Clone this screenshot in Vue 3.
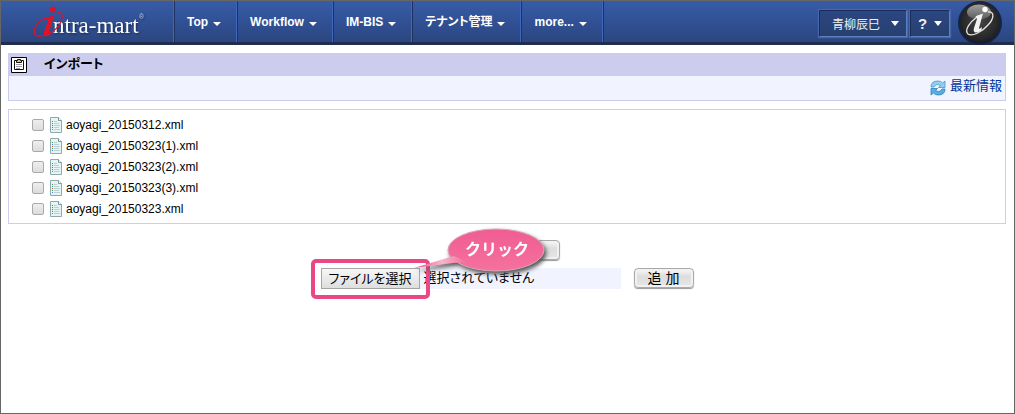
<script setup>
const menu = ['Top', 'Workflow', 'IM-BIS', 'テナント管理', 'more...']
const files = [
  'aoyagi_20150312.xml',
  'aoyagi_20150323(1).xml',
  'aoyagi_20150323(2).xml',
  'aoyagi_20150323(3).xml',
  'aoyagi_20150323.xml',
]
</script>

<template>
  <div class="page">
    <header class="header">
      <a class="logo" href="#">
        <svg width="120" height="40" viewBox="0 0 120 40" role="img">
          <g class="logo-shade">
            <text class="wordmark" x="21" y="32">ntra-mart</text>
            <text class="reg" x="107" y="18">®</text>
          </g>
          <path d="M25 12C30 10 32 15 28 23C23 31 12 36 5 35C-1 32 3 22 13 17" fill="none" stroke="#d8142a" stroke-width="1.3" />
          <circle cx="21" cy="8.500" r="3" fill="#e01226" />
          <path d="M14 17L22 14L17 31Q17 33 20 31L19.500 32.500Q16 36 13 35Q11 34 12 31L16 20Q16.500 17.500 14 18Z" fill="#e01226" />
        </svg>
      </a>
      <nav class="menu">
        <a v-for="item in menu" :key="item" class="menu-item" href="#">
          {{ item }}<i class="caret"></i>
        </a>
      </nav>
      <div class="tools">
        <button class="tool user" type="button">青柳辰巳<i class="arrow"></i></button>
        <button class="tool help" type="button"><b>?</b><i class="arrow"></i></button>
        <svg class="badge" width="46" height="44" viewBox="0 0 46 44">
          <defs>
            <radialGradient id="disc" cx="50%" cy="45%" r="55%">
              <stop offset="0" stop-color="#444" />
              <stop offset="0.75" stop-color="#292929" />
              <stop offset="1" stop-color="#161b29" />
            </radialGradient>
            <linearGradient id="shine" x1="0" y1="0" x2="0" y2="1">
              <stop offset="0" stop-color="#a0a0a0" />
              <stop offset="1" stop-color="#5b5b5b" />
            </linearGradient>
          </defs>
          <circle cx="23" cy="22" r="22" fill="#15244b" />
          <circle cx="23" cy="22" r="20.500" fill="url(#disc)" />
          <ellipse cx="22" cy="11" rx="12" ry="7.500" fill="url(#shine)" />
          <path d="M31 11C38 10 37 18 31 24C25 31 15 36 11 33C7 29 13 21 20 16" fill="none" stroke="#e4e4e4" stroke-width="1.300" />
          <circle cx="28" cy="8.500" r="2.700" fill="#fff" />
          <path d="M19 15L26 12.500L22 27Q22 29 25 26L24.500 29Q21 32 18 31.500Q16 30 17 27L20 18Q20.500 16 18.500 16Z" fill="#f2f2f2" />
        </svg>
      </div>
    </header>

    <main class="content">
      <section class="title-panel">
        <h1 class="title">
          <svg width="16" height="16" viewBox="0 0 16 16">
            <path d="M.5.5h15v15H.5z" fill="#fff" stroke="#000" />
            <path d="M3.500 3.500h9v9h-9z" fill="#fff" stroke="#111" />
            <path d="M5.500 5.500v-2h1v-1h3v1h1v2z" fill="#e6bd70" stroke="#111" />
            <path d="M5 7.500h6M5 9.500h6M5 11.500h4" stroke="#99a" />
          </svg>
          <span>インポート</span>
        </h1>
        <div class="actions">
          <a class="refresh" href="#">
            <svg width="16" height="16" viewBox="0 0 16 16">
              <path d="M1 7Q1 1 8 1Q11 1 12.500 3L15 1V7.500H8.500L10.500 5.500Q6 3 4 7Z" fill="#8fd0f2" stroke="#4a94c8" stroke-width=".8" />
              <path d="M15 9Q15 15 8 15Q5 15 3.500 13L1 15V8.500H7.500L5.500 10.500Q10 13 12 9Z" fill="#54b0e4" stroke="#2f80bc" stroke-width=".8" />
            </svg>
            最新情報
          </a>
        </div>
      </section>

      <ul class="files">
        <li v-for="file in files" :key="file">
          <label class="file">
            <input class="check" type="checkbox" />
            <svg width="12" height="16" viewBox="0 0 12 16">
              <path d="M.5.5h8l3 3v12H.5z" fill="#e6f4f4" stroke="#8eaaac" />
              <path d="M8.500.5v3h3" fill="#fff" stroke="#78999b" />
              <path d="M2 4.500h1M2 10.500h1" stroke="#2ba52b" />
              <path d="M2 6.500h1M2 12.500h1" stroke="#3d82dc" />
              <path d="M2 8.500h1" stroke="#c64b3c" />
              <path d="M4 4.500h3M4 6.500h5M4 8.500h6M4 10.500h5M4 12.500h6" stroke="#bccfd1" />
            </svg>
            <span>{{ file }}</span>
          </label>
        </li>
      </ul>

      <div class="submit-row">
        <button class="glass run" type="button" aria-label="インポート"></button>
      </div>
      <form class="upload" @submit.prevent>
        <div class="picker">
          <div class="pick">
            <button class="choose" type="button">ファイルを選択</button>
            <div class="highlight"></div>
            <svg class="callout" width="140" height="50" viewBox="0 0 140 50">
              <defs>
                <linearGradient id="tail" x1="0" y1="0" x2="1" y2="0">
                  <stop offset="0" stop-color="#ea4884" />
                  <stop offset="0.5" stop-color="#f6b5cb" />
                  <stop offset="1" stop-color="#f2679a" />
                </linearGradient>
                <linearGradient id="pink" x1="0" y1="0" x2="0" y2="1">
                  <stop offset="0" stop-color="#f05c91" />
                  <stop offset="1" stop-color="#f5719e" />
                </linearGradient>
              </defs>
              <ellipse cx="87" cy="22" rx="48" ry="21" fill="url(#pink)" stroke="#d9a9b9" />
              <path d="M5 40L45 28L60 35Q52 34 44 35Z" fill="url(#tail)" />
              <text class="callout-text" x="88" y="27">クリック</text>
            </svg>
          </div>
          <span class="status">選択されていません</span>
        </div>
        <button class="glass add" type="submit">追 加</button>
      </form>
    </main>
  </div>
</template>

<style>
body {
  margin: 0;
}
</style>

<style scoped>
.page {
  box-sizing: border-box;
  min-height: 100vh;
  border: 1px solid #666;
  background: #fff;
  color: #000;
  font: 13px/20px "Liberation Sans", "Noto Sans CJK JP", sans-serif;
}
.header {
  display: flex;
  height: 41px;
  border-bottom: 3px solid #212d4c;
  background: linear-gradient(#375ca8, #2b4680);
}
.logo {
  width: 172px;
  box-sizing: border-box;
  padding-left: 31px;
  flex: none;
}
.logo svg {
  display: block;
}
.logo-shade {
  filter: drop-shadow(1px 1px 1px #172a55);
}
.wordmark {
  font: 23px "Liberation Serif", serif;
  fill: #fff;
}
.reg {
  font: 7px "Liberation Sans", sans-serif;
  fill: #c3cde2;
}
.menu {
  display: flex;
  border-right: 1px solid #1f3261;
  border-left: 1px solid #3e68bd;
}
.menu-item {
  display: flex;
  align-items: center;
  box-sizing: border-box;
  padding: 0 15px 0 12px;
  border-left: 1px solid #1f3261;
  border-right: 1px solid #3e68bd;
  color: #fff;
  font-size: 12px;
  font-weight: bold;
  font-feature-settings: "palt";
  text-decoration: none;
}
.caret {
  margin: 4px 0 0 5px;
  border: 4px solid transparent;
  border-top-color: #fff;
  border-bottom: 0;
}
.tools {
  display: flex;
  align-items: center;
  margin-left: auto;
  padding-right: 15px;
  gap: 3px;
}
.tool {
  display: flex;
  align-items: center;
  justify-content: space-between;
  box-sizing: border-box;
  height: 27px;
  margin-top: 4px;
  padding: 0 7px 0 12px;
  border: 1px solid #5d7fbd;
  border-top-color: #1b2d56;
  border-left-color: #1b2d56;
  background: linear-gradient(#2b4681, #28406f);
  box-shadow: 0 0 1px 1px #4467ad;
  color: #eee;
  font: 12px "Liberation Sans", "Noto Sans CJK JP", sans-serif;
}
.user {
  width: 88px;
}
.help {
  width: 40px;
  padding-left: 7px;
}
.help b {
  font-size: 15px;
}
.arrow {
  border: 4px solid transparent;
  border-top: 5px solid #fff;
  border-bottom: 0;
}
.badge {
  margin: 2px -4px 0 4px;
}
.content {
  padding: 8px 8px 8px 7px;
}
.title-panel {
  border: 1px solid #cccdee;
  background: #f1f3ff;
}
.title {
  display: flex;
  align-items: center;
  gap: 17px;
  height: 22px;
  margin: 0;
  padding-left: 2px;
  background: #cccdee;
  font-size: 13px;
  font-feature-settings: "palt";
}
.title span {
  padding-bottom: 3px;
}
.actions {
  display: flex;
  justify-content: flex-end;
  height: 24px;
  padding-right: 3px;
}
.refresh {
  display: flex;
  align-items: center;
  gap: 4px;
  height: 20px;
  color: #003399;
  font-size: 13px;
  text-decoration: none;
}
.refresh svg {
  margin-top: 4px;
}
.files {
  margin: 8px 0 0;
  padding: 5px 0 3px 23px;
  border: 1px solid #cccdee;
  list-style: none;
}
.files li {
  height: 21px;
}
.file {
  display: inline-flex;
  align-items: center;
  height: 20px;
}
.check {
  appearance: none;
  width: 12px;
  height: 12px;
  margin: 0 6px 0 0;
  border: 1px solid #aaa;
  border-radius: 2px;
  background: linear-gradient(#eee, #dcdcdc);
}
.file span {
  margin-left: 4px;
  font-size: 12px;
}
.submit-row {
  display: flex;
  justify-content: center;
  margin-top: 16px;
}
.glass {
  box-sizing: border-box;
  height: 20px;
  padding: 0;
  border: 1px solid #aaa;
  border-radius: 4px;
  background: linear-gradient(#fafafa, #ddd 40%, #e6e6e6);
  box-shadow: inset 0 0 0 2px #f1f1f1, 0 1px 1px #999;
  color: #000;
  font: 14px/16px "Liberation Sans", "Noto Sans CJK JP", sans-serif;
}
.run {
  width: 106px;
}
.add {
  width: 60px;
}
.upload {
  display: flex;
  justify-content: center;
  gap: 13px;
  margin-top: 8px;
}
.picker {
  display: flex;
  width: 300px;
  height: 21px;
  background: #f1f3ff;
}
.pick {
  position: relative;
}
.choose {
  box-sizing: border-box;
  width: 99px;
  height: 21px;
  padding: 0;
  border: 1px solid #a5a5a5;
  background: linear-gradient(#f7f7f7, #dedede);
  color: #000;
  font: 13px/18px "Liberation Sans", "Noto Sans CJK JP", sans-serif;
  font-feature-settings: "palt";
}
.status {
  margin-left: 4px;
  font-size: 13px;
  font-feature-settings: "palt";
}
.highlight {
  position: absolute;
  inset: -9px -10px -10px;
  border: 4px solid #ea4884;
  border-radius: 5px;
}
.callout {
  position: absolute;
  top: -40px;
  left: 88px;
  overflow: visible;
  filter: drop-shadow(2px 3px 2px #555);
}
.callout-text {
  fill: #fff;
  font: bold 16px "Noto Sans CJK JP", sans-serif;
  text-anchor: middle;
}
</style>
